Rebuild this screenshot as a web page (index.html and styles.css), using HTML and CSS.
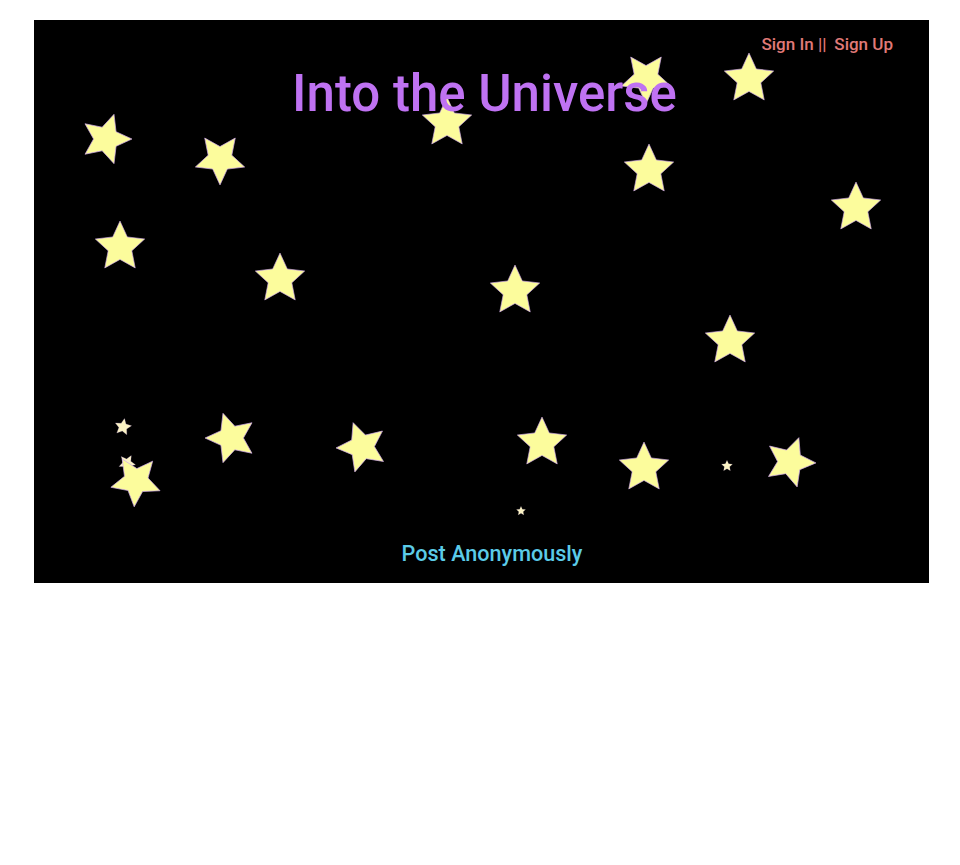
FILE: index.html
```html
<!DOCTYPE html>
<html lang="en">
<head>
<meta charset="utf-8">
<title>Into the Universe</title>
<link rel="stylesheet" href="styles.css">
</head>
<body>
<svg width="0" height="0" class="defs" aria-hidden="true">
  <defs>
    <symbol id="star" viewBox="0 0 100 100">
      <polygon points="50,2 63.5,31.4 95.7,35.2 71.9,57.1 78.2,88.8 50,73 21.8,88.8 28.1,57.1 4.3,35.2 36.5,31.4"/>
    </symbol>
  </defs>
</svg>
<main class="sky">
  <div class="stars" aria-hidden="true">
    <svg class="star" style="--x:585px;--y:31px;--r:36deg"><use href="#star"/></svg>
    <svg class="star" style="--x:688px;--y:32px;--r:0deg"><use href="#star"/></svg>
    <svg class="star" style="--x:45px;--y:92px;--r:18deg"><use href="#star"/></svg>
    <svg class="star" style="--x:159px;--y:112px;--r:36deg"><use href="#star"/></svg>
    <svg class="star" style="--x:386px;--y:76px;--r:0deg"><use href="#star"/></svg>
    <svg class="star" style="--x:588px;--y:123px;--r:0deg"><use href="#star"/></svg>
    <svg class="star" style="--x:795px;--y:161px;--r:0deg"><use href="#star"/></svg>
    <svg class="star" style="--x:59px;--y:200px;--r:0deg"><use href="#star"/></svg>
    <svg class="star" style="--x:219px;--y:232px;--r:0deg"><use href="#star"/></svg>
    <svg class="star" style="--x:454px;--y:244px;--r:0deg"><use href="#star"/></svg>
    <svg class="star" style="--x:669px;--y:294px;--r:0deg"><use href="#star"/></svg>
    <svg class="star sm" style="--x:80px;--y:398px;--r:10deg"><use href="#star"/></svg>
    <svg class="star sm" style="--x:84px;--y:434px;--r:30deg"><use href="#star"/></svg>
    <svg class="star" style="--x:75px;--y:434px;--r:40deg"><use href="#star"/></svg>
    <svg class="star" style="--x:170px;--y:391px;--r:-18deg"><use href="#star"/></svg>
    <svg class="star" style="--x:301px;--y:400px;--r:-20deg"><use href="#star"/></svg>
    <svg class="star" style="--x:481px;--y:396px;--r:0deg"><use href="#star"/></svg>
    <svg class="star" style="--x:583px;--y:421px;--r:0deg"><use href="#star"/></svg>
    <svg class="star xs" style="--x:687px;--y:440px;--r:0deg"><use href="#star"/></svg>
    <svg class="star" style="--x:729px;--y:415px;--r:20deg"><use href="#star"/></svg>
    <svg class="star xxs" style="--x:482px;--y:486px;--r:0deg"><use href="#star"/></svg>
  </div>
  <nav class="auth">
    <a class="auth-link" href="#">Sign In ||</a>
    <a class="auth-link" href="#">Sign Up</a>
  </nav>
  <h1 class="title">Into the Universe</h1>
  <footer class="post">
    <a class="post-link" href="#">Post Anonymously</a>
  </footer>
</main>
</body>
</html>
```
FILE: styles.css
```css
html, body {
  margin: 0;
  padding: 0;
  background: #ffffff;
}

body {
  font-family: Roboto, "Liberation Sans", Arial, sans-serif;
}

.defs {
  position: absolute;
  width: 0;
  height: 0;
  overflow: hidden;
}

.sky {
  position: relative;
  box-sizing: border-box;
  width: 895px;
  height: 563px;
  margin: 20px 0 0 34px;
  padding: 14px 36px 14px 36px;
  background: #000000;
  display: flex;
  flex-direction: column;
  overflow: hidden;
}

.stars {
  position: absolute;
  inset: 0;
  z-index: 0;
}

.star {
  position: absolute;
  left: var(--x);
  top: var(--y);
  width: 54px;
  height: 54px;
  transform: rotate(var(--r));
  overflow: visible;
}

.star.sm {
  width: 18px;
  height: 18px;
}

.star.xs {
  width: 12px;
  height: 12px;
}

.star.xxs {
  width: 10px;
  height: 10px;
}

.star use {
  fill: #fcfc9c;
  stroke: #cfa8ec;
  stroke-width: 1.2px;
  vector-effect: non-scaling-stroke;
}

.star.sm use,
.star.xs use,
.star.xxs use {
  fill: #fbf3c4;
  stroke: #c9a6ee;
}

.auth {
  position: relative;
  z-index: 1;
  display: flex;
  justify-content: flex-end;
  gap: 8px;
  line-height: 21px;
}

.auth-link {
  color: #e07a78;
  font-size: 17px;
  font-weight: 500;
  text-decoration: none;
}

.title {
  position: relative;
  z-index: 1;
  margin: 9px 0 0 0;
  padding-left: 6px;
  text-align: center;
  color: #bf72f2;
  font-size: 51px;
  font-weight: 500;
  line-height: 60px;
}

.post {
  position: relative;
  z-index: 1;
  margin-top: auto;
  padding-left: 21px;
  text-align: center;
  line-height: 26px;
}

.post-link {
  color: #5bcbe8;
  font-size: 21.6px;
  font-weight: 500;
  text-decoration: none;
}
```
